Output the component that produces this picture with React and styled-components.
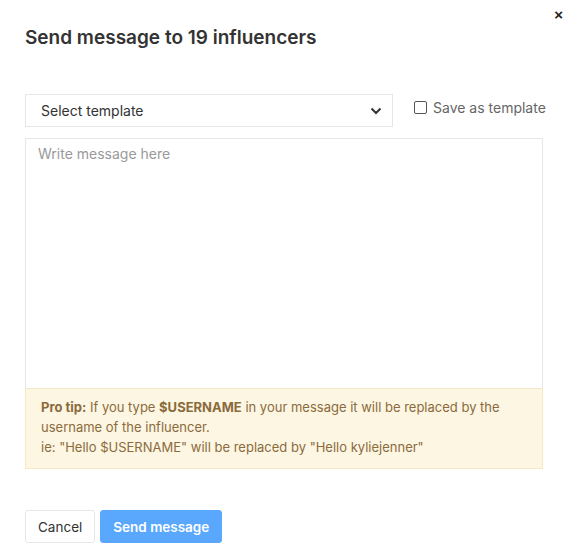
import styled, { createGlobalStyle } from 'styled-components';

const GlobalStyle = createGlobalStyle`
  body {
    margin: 0;
    background: #fff;
    font-family: Inter, "Liberation Sans", sans-serif;
    color: #333;
  }
`;

const Modal = styled.div`
  position: relative;
  width: 575px;
  height: 555px;
  box-sizing: border-box;
  padding: 26px 32px 0 25px;
`;

const Close = styled.button`
  position: absolute;
  top: 6px;
  right: 12px;
  border: none;
  background: none;
  padding: 0;
  font-size: 15px;
  font-weight: 700;
  color: #222;
  cursor: pointer;
`;

const Title = styled.h2`
  margin: 0;
  font-size: 19px;
  line-height: 24px;
  font-weight: 600;
  color: #333;
`;

const TemplateRow = styled.div`
  display: flex;
  align-items: flex-start;
  gap: 21px;
  margin-top: 44px;
`;

const Select = styled.div`
  flex: 0 0 368px;
  height: 33px;
  box-sizing: border-box;
  border: 1px solid #e6e6e6;
  display: flex;
  align-items: center;
  justify-content: space-between;
  padding: 0 10px 0 15px;
  font-size: 14px;
  color: #333;
`;

const CheckLabel = styled.label`
  display: flex;
  align-items: center;
  gap: 6px;
  margin-top: 5px;
  font-size: 14px;
  color: #666;
  white-space: nowrap;
`;

const Box = styled.span`
  width: 11px;
  height: 11px;
  border: 1px solid #555;
  border-radius: 2px;
`;

const MessageArea = styled.textarea`
  display: block;
  width: 100%;
  height: 250px;
  margin-top: 11px;
  box-sizing: border-box;
  border: 1px solid #e6e6e6;
  border-bottom: none;
  padding: 6px 12px;
  resize: none;
  font-family: inherit;
  font-size: 14px;
  color: #333;
  outline: none;
  &::placeholder {
    color: #999;
  }
`;

const Tip = styled.div`
  background: #fcf6e3;
  border: 1px solid #f6e8c4;
  padding: 8px 15px 11px;
  font-size: 13px;
  line-height: 20px;
  color: #8b6b3c;
  b {
    font-weight: 700;
  }
`;

const Actions = styled.div`
  display: flex;
  gap: 5px;
  margin-top: 41px;
`;

const Button = styled.button`
  height: 33px;
  box-sizing: border-box;
  padding: 0 12px;
  border-radius: 3px;
  font-family: inherit;
  font-size: 13.5px;
  cursor: pointer;
  border: 1px solid ${p => (p.$primary ? '#5aa8fe' : '#e6e6e6')};
  background: ${p => (p.$primary ? '#5aa8fe' : '#fff')};
  color: ${p => (p.$primary ? '#fff' : '#333')};
  font-weight: ${p => (p.$primary ? 600 : 400)};
`;

const Chevron = () => (
  <svg width="12" height="8" viewBox="0 0 12 8">
    <path d="M1.5 1.5 L6 6 L10.5 1.5" fill="none" stroke="#333" strokeWidth="2" />
  </svg>
);

export default function App() {
  return (
    <>
      <GlobalStyle />
      <Modal>
        <Close>×</Close>
        <Title>Send message to 19 influencers</Title>
        <TemplateRow>
          <Select>
            <span>Select template</span>
            <Chevron />
          </Select>
          <CheckLabel>
            <Box />
            Save as template
          </CheckLabel>
        </TemplateRow>
        <MessageArea placeholder="Write message here" />
        <Tip>
          <b>Pro tip:</b> If you type <b>$USERNAME</b> in your message it will be replaced by the
          username of the influencer.
          <br />
          ie: "Hello $USERNAME" will be replaced by "Hello kyliejenner"
        </Tip>
        <Actions>
          <Button>Cancel</Button>
          <Button $primary>Send message</Button>
        </Actions>
      </Modal>
    </>
  );
}
